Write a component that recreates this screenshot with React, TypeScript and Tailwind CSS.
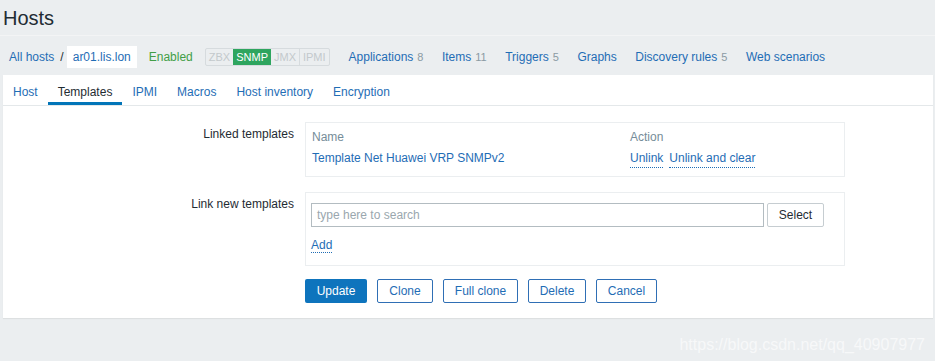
import React from 'react';

const LINK = 'text-[#1f6db5]';

function NavLink({ label, count }: { label: string; count?: string }) {
  return (
    <span className={`${LINK} whitespace-nowrap`}>
      {label}
      {count && <span className="ml-[4px] text-[11px] text-[#8a9aa3]">{count}</span>}
    </span>
  );
}

const tabs = ['Host', 'Templates', 'IPMI', 'Macros', 'Host inventory', 'Encryption'];

export default function App() {
  return (
    <div className="min-h-[361px] w-[935px] bg-[#ebeef0] font-['Liberation_Sans',Arial,sans-serif] text-[12px] text-[#1f2c33]">
      {/* Title */}
      <div className="flex h-[36px] items-center border-b border-[#f3f4f5] pl-[3px]">
        <h1 className="text-[20px] leading-none text-[#1f2c33]">Hosts</h1>
      </div>

      {/* Host nav row */}
      <div className="flex h-[39px] items-center pl-[9px] pt-[3px]">
        <span className={LINK}>All hosts</span>
        <span className="ml-[6px] text-[#1f2c33]">/</span>
        <span className={`ml-[3px] bg-white px-[6px] py-[2px] ${LINK}`}>ar01.lis.lon</span>
        <span className="ml-[12px] text-[#429e47]">Enabled</span>
        <div className="ml-[12px] flex h-[18px] items-stretch rounded-[2px] border border-[#d6dbde] text-[11px] leading-[16px]">
          <span className="px-[3px] text-[#c3c9cc]">ZBX</span>
          <span className="bg-[#2ea55f] px-[3px] text-white">SNMP</span>
          <span className="border-r border-[#d6dbde] px-[3px] text-[#c3c9cc]">JMX</span>
          <span className="px-[3px] text-[#c3c9cc]">IPMI</span>
        </div>
        <div className="ml-[19px] flex items-center gap-[18.5px]">
          <NavLink label="Applications" count="8" />
          <NavLink label="Items" count="11" />
          <NavLink label="Triggers" count="5" />
          <NavLink label="Graphs" />
          <NavLink label="Discovery rules" count="5" />
          <NavLink label="Web scenarios" />
        </div>
      </div>

      {/* Main panel */}
      <div className="mx-[3px] mr-[2px] bg-white shadow-[0_1px_1px_rgba(0,0,0,0.06)]">
        {/* Tabs */}
        <div className="flex h-[31px] items-stretch border-b border-[#e4e8ea]">
          {tabs.map((t) => (
            <div
              key={t}
              className={
                t === 'Templates'
                  ? 'flex items-center border-b-[3px] border-[#0275b8] px-[10px] pt-[7px] text-[#1f2c33]'
                  : `flex items-center px-[10px] pt-[4px] ${LINK}`
              }
            >
              {t}
            </div>
          ))}
        </div>

        {/* Form */}
        <div className="pb-[15px] pt-[16px]">
          {/* Linked templates */}
          <div className="flex">
            <div className="w-[291px] pt-[3px] text-right">Linked templates</div>
            <div className="ml-[11px] w-[540px] border border-[#ebeef0] px-[6px] pb-[8px] pt-[5px]">
              <div className="flex text-[#768d99]">
                <span className="w-[318px]">Name</span>
                <span>Action</span>
              </div>
              <div className="mt-[3px] flex">
                <span className={`w-[318px] ${LINK}`}>Template Net Huawei VRP SNMPv2</span>
                <span className={`border-b border-dotted border-[#1f6db5] ${LINK}`}>Unlink</span>
                <span className={`ml-[6px] border-b border-dotted border-[#1f6db5] ${LINK}`}>Unlink and clear</span>
              </div>
            </div>
          </div>

          {/* Link new templates */}
          <div className="mt-[15px] flex">
            <div className="w-[291px] pt-[3px] text-right">Link new templates</div>
            <div className="ml-[11px] w-[540px] border border-[#ebeef0] px-[5px] pb-[11px] pt-[10px]">
              <div className="flex items-center">
                <div className="flex h-[24px] w-[453px] items-center border border-[#b3bcc1] px-[5px] text-[#9aa7ae]">
                  type here to search
                </div>
                <button className="ml-[3px] h-[24px] w-[57px] rounded-[2px] border border-[#c6cdd1] bg-white text-[#1f2c33]">
                  Select
                </button>
              </div>
              <div className="mt-[9px]">
                <span className={`border-b border-dotted border-[#1f6db5] ${LINK}`}>Add</span>
              </div>
            </div>
          </div>

          {/* Buttons */}
          <div className="ml-[302px] mt-[13px] flex gap-[10px]">
            <button className="h-[24px] w-[62px] rounded-[2px] bg-[#0e74bd] text-white">Update</button>
            <button className={`h-[24px] w-[56px] rounded-[2px] border border-[#2f6fb5] bg-white ${LINK}`}>Clone</button>
            <button className={`h-[24px] w-[75px] rounded-[2px] border border-[#2f6fb5] bg-white ${LINK}`}>Full clone</button>
            <button className={`h-[24px] w-[58px] rounded-[2px] border border-[#2f6fb5] bg-white ${LINK}`}>Delete</button>
            <button className={`h-[24px] w-[61px] rounded-[2px] border border-[#2f6fb5] bg-white ${LINK}`}>Cancel</button>
          </div>
        </div>
      </div>

      {/* Watermark */}
      <div className="flex justify-end pr-[10px] pt-[15px] text-[16px] text-[#f7f8f9]">
        https://blog.csdn.net/qq_40907977
      </div>
    </div>
  );
}
